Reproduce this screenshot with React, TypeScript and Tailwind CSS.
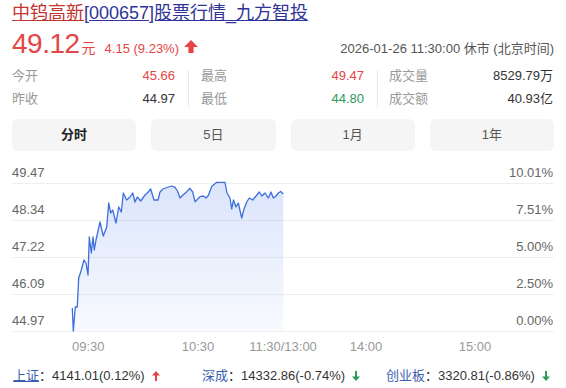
import React from 'react';

// price curve, traced in page coordinates (x, y)
const curve: [number, number][] = [
  [72.3, 308], [73.3, 331], [75.3, 307], [77.3, 307], [78.7, 278], [80.7, 272], [84, 260], [86, 263],
  [88, 275], [89.3, 237], [91.3, 253], [93, 237], [94.3, 250], [96, 240], [100, 222], [103.3, 236],
  [106.7, 227], [108.7, 203], [110.7, 213], [112.7, 210], [116, 223], [118.7, 207], [121.3, 212],
  [123.3, 193], [126.7, 200], [130, 197], [132.7, 193], [135, 202], [137.3, 197], [140.7, 201],
  [145, 195], [147.3, 193], [150.7, 189], [154, 200], [158, 200], [160, 192], [163, 189], [167, 187.5],
  [171.7, 186], [175, 187.3], [177.5, 191], [180, 198], [183, 195], [186.7, 191.7], [190, 188.3],
  [192.7, 192], [195, 201.7], [200, 196.7], [203.3, 196], [206, 198], [208.3, 195.5], [211.7, 186.5],
  [216.7, 182.3], [225, 182.3], [227, 193], [230, 198], [231.7, 209], [233.5, 200], [236, 207],
  [238.3, 203], [241.7, 218], [244, 209], [246.7, 202], [249.3, 198], [252.7, 200], [256, 196],
  [259.3, 192], [261.7, 196], [265, 193], [268.3, 198], [271, 192], [273.3, 198], [276, 196],
  [278.3, 193], [280.7, 191.5], [283.3, 194],
];

const OX = 12;
const OY = 160;
const gridY = [183, 220, 257, 294, 331];
const leftLabels = ['49.47', '48.34', '47.22', '46.09', '44.97'];
const rightLabels = ['10.01%', '7.51%', '5.00%', '2.50%', '0.00%'];
const times = [
  { t: '09:30', x: 72, anchor: 'start' },
  { t: '10:30', x: 198, anchor: 'middle' },
  { t: '11:30/13:00', x: 283, anchor: 'middle' },
  { t: '14:00', x: 366, anchor: 'middle' },
  { t: '15:00', x: 475, anchor: 'middle' },
];

function ArrowUp({ className = '' }: { className?: string }) {
  return (
    <svg width="14" height="13" viewBox="0 0 14 13" className={className}>
      <path d="M7 0 L14 7 H9.6 V13 H4.4 V7 H0 Z" fill="#e64545" />
    </svg>
  );
}

function SmallArrow({ up }: { up: boolean }) {
  return (
    <svg width="8" height="10" viewBox="0 0 8 10" className="ml-[7px]">
      {up ? (
        <path d="M4 0 L8 4.5 H5 V10 H3 V4.5 H0 Z" fill="#e64545" />
      ) : (
        <path d="M4 10 L8 5.5 H5 V0 H3 V5.5 H0 Z" fill="#2e9a5a" />
      )}
    </svg>
  );
}

function StatRow({ label, value, color = 'text-[#333]' }: { label: string; value: string; color?: string }) {
  return (
    <div className="flex h-[23px] items-center justify-between leading-[23px]">
      <span className="text-[#999]">{label}</span>
      <span className={color}>{value}</span>
    </div>
  );
}

function Chart() {
  const pts = curve.map(([x, y]) => `${(x - OX).toFixed(1)},${(y - OY).toFixed(1)}`);
  const line = pts.join(' ');
  const first = curve[0];
  const last = curve[curve.length - 1];
  const area = `${line} ${(last[0] - OX).toFixed(1)},${gridY[4] - OY} ${(first[0] - OX).toFixed(1)},${gridY[4] - OY}`;

  return (
    <svg width="542" height="204" viewBox="0 0 542 204" className="mt-[9px] block">
      <defs>
        <linearGradient id="fillBlue" x1="0" y1="0" x2="0" y2="1">
          <stop offset="0%" stopColor="#4a7bea" stopOpacity="0.2" />
          <stop offset="100%" stopColor="#4a7bea" stopOpacity="0.04" />
        </linearGradient>
      </defs>
      {gridY.map((y) => (
        <line key={y} x1="0" x2="542" y1={y - OY + 0.5} y2={y - OY + 0.5} stroke="#efefef" strokeWidth="1" />
      ))}
      {leftLabels.map((l, i) => (
        <text key={l} x="0" y={gridY[i] - OY - 6.3} fontSize="13" fill="#666">
          {l}
        </text>
      ))}
      {rightLabels.map((l, i) => (
        <text key={l} x="541" y={gridY[i] - OY - 6.3} fontSize="13" fill="#666" textAnchor="end">
          {l}
        </text>
      ))}
      <polygon points={area} fill="url(#fillBlue)" />
      <polyline points={line} fill="none" stroke="#3d6fdc" strokeWidth="1.3" strokeLinejoin="round" />
      {times.map((t) => (
        <text
          key={t.t}
          x={t.x - OX}
          y={191}
          fontSize="13"
          fill="#999"
          textAnchor={t.anchor as 'start' | 'middle'}
        >
          {t.t}
        </text>
      ))}
    </svg>
  );
}

export default function App() {
  return (
    <div className="h-[388px] w-[566px] overflow-hidden bg-white px-3 font-['Liberation_Sans','Noto_Sans_CJK_SC',sans-serif] text-[13px] text-[#333]">
      {/* Title */}
      <div className="h-[28px] whitespace-nowrap pt-[2px] text-[18px] leading-[22px]">
        <a className="text-[#c23531] underline">中钨高新</a>
        <a className="text-[#30349a] underline">[000657]股票行情_九方智投</a>
      </div>

      {/* Price line */}
      <div className="flex h-[32px] items-baseline leading-[32px]">
        <span className="text-[28px] tracking-[-0.5px] text-[#e64545]">49.12</span>
        <span className="ml-[2px] text-[14px] text-[#e64545]">元</span>
        <span className="ml-[9px] text-[#e64545]">4.15 (9.23%)</span>
        <ArrowUp className="mb-[1px] ml-[5px]" />
        <span className="ml-auto text-[#555]">2026-01-26 11:30:00 休市 (北京时间)</span>
      </div>

      {/* Stats */}
      <div className="mt-[4px] flex h-[46px]">
        <div className="flex w-[163px] flex-col">
          <StatRow label="今开" value="45.66" color="text-[#e64545]" />
          <StatRow label="昨收" value="44.97" />
        </div>
        <div className="mb-[3px] ml-[13px] mr-[12px] mt-[6px] w-px bg-[#e8e8e8]" />
        <div className="flex w-[163px] flex-col">
          <StatRow label="最高" value="49.47" color="text-[#e64545]" />
          <StatRow label="最低" value="44.80" color="text-[#2e9a5a]" />
        </div>
        <div className="mb-[3px] ml-[13px] mr-[11px] mt-[6px] w-px bg-[#e8e8e8]" />
        <div className="flex flex-1 flex-col pr-px">
          <StatRow label="成交量" value="8529.79万" />
          <StatRow label="成交额" value="40.93亿" />
        </div>
      </div>

      {/* Tabs */}
      <div className="mt-[9px] grid grid-cols-4 gap-[15px]">
        <div className="flex h-[32px] items-center justify-center rounded-[6px] bg-[#f5f5f5] font-bold text-[#222]">分时</div>
        <div className="flex h-[32px] items-center justify-center rounded-[6px] bg-[#f5f5f5] text-[#555]">5日</div>
        <div className="flex h-[32px] items-center justify-center rounded-[6px] bg-[#f5f5f5] text-[#555]">1月</div>
        <div className="flex h-[32px] items-center justify-center rounded-[6px] bg-[#f5f5f5] text-[#555]">1年</div>
      </div>

      <Chart />

      {/* Index footer */}
      <div className="flex h-[24px] items-center pl-px leading-[24px]">
        <div className="flex w-[189px] items-center">
          <a className="text-[#3a5cb0] underline">上证</a>
          <span>：4141.01(0.12%)</span>
          <SmallArrow up />
        </div>
        <div className="flex w-[184px] items-center">
          <span className="text-[#3a5cb0]">深成</span>
          <span>：14332.86(-0.74%)</span>
          <SmallArrow up={false} />
        </div>
        <div className="flex items-center">
          <span className="text-[#3a5cb0]">创业板</span>
          <span>：3320.81(-0.86%)</span>
          <SmallArrow up={false} />
        </div>
      </div>
    </div>
  );
}
